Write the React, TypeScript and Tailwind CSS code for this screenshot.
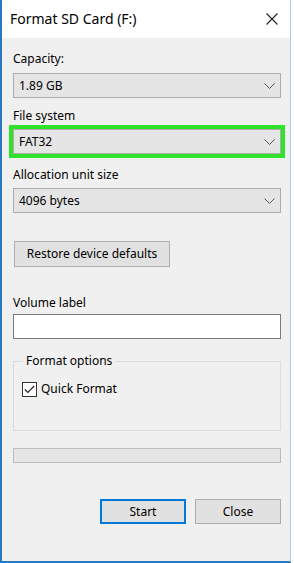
import React from "react";

const font = { fontFamily: '"Noto Sans", "Open Sans", Arial, sans-serif' };

const Chevron = () => (
  <svg width="11" height="6" viewBox="0 0 11 6" className="shrink-0">
    <polyline points="0.5,0.5 5.5,5.5 10.5,0.5" fill="none" stroke="#555" strokeWidth="1" />
  </svg>
);

// one combo box row: grey box with chevron
const Combo = ({ value, highlight = false }: { value: string; highlight?: boolean }) => (
  <div
    className={`flex h-[25px] items-center justify-between border border-[#adadad] bg-[#e5e5e5] pl-[5px] pr-[5px] ${
      highlight ? "outline-4 outline-[#2fe32a]" : ""
    }`}
  >
    <span className="text-[12px] leading-none text-black">{value}</span>
    <Chevron />
  </div>
);

const Label = ({ children, className = "" }: { children: React.ReactNode; className?: string }) => (
  <div className={`h-4 text-[12px] leading-4 text-black ${className}`}>{children}</div>
);

export default function App() {
  return (
    <div className="h-[563px] w-[294px] bg-white" style={font}>
      <div className="flex h-[563px] w-[291px] flex-col border-b-2 border-l-2 border-r border-b-[#2a78c2] border-l-[#2a78c2] border-r-[#a9cbea] bg-[#f0f0f0]">
        {/* Title bar */}
        <div className="flex h-[38px] shrink-0 items-center justify-between bg-white pl-[8px] pr-[12px]">
          <span className="text-[14px] leading-none text-black">Format SD Card (F:)</span>
          <svg width="12" height="12" viewBox="0 0 12 12">
            <path d="M0.5 0.5 L11.5 11.5 M11.5 0.5 L0.5 11.5" stroke="#222" strokeWidth="1.1" fill="none" />
          </svg>
        </div>

        <div className="flex flex-col pl-[11px] pr-[9px]">
          <Label className="mt-[13px]">Capacity:</Label>
          <div className="mt-[6px]">
            <Combo value="1.89 GB" />
          </div>

          <Label className="mt-[10px]">File system</Label>
          <div className="mt-[5px]">
            <Combo value="FAT32" highlight />
          </div>

          <Label className="mt-[13px]">Allocation unit size</Label>
          <div className="mt-[5px]">
            <Combo value="4096 bytes" />
          </div>

          <button className="mt-[28px] ml-[1px] flex h-[26px] w-[156px] items-center justify-center border border-[#adadad] bg-[#e1e1e1] text-[12px] text-black">
            Restore device defaults
          </button>

          <Label className="mt-[28px]">Volume label</Label>
          <div className="mt-[3px] h-[25px] border border-[#7a7a7a] bg-white" />

          <fieldset className="mt-[14px] h-[78px] border border-[#dcdcdc] px-[8px]">
            <legend className="ml-[1px] px-[3px] text-[12px] leading-4 text-black">Format options</legend>
            <div className="mt-[12px] flex items-center gap-[4px]">
              <div className="flex h-[15px] w-[15px] items-center justify-center border border-[#333] bg-white">
                <svg width="11" height="9" viewBox="0 0 11 9">
                  <polyline points="0.8,4.5 3.8,7.5 10.2,1" fill="none" stroke="#222" strokeWidth="1.1" />
                </svg>
              </div>
              <span className="text-[12px] leading-4 text-black">Quick Format</span>
            </div>
          </fieldset>

          <div className="mt-[17px] h-[15px] border border-[#bcbcbc] bg-[#e6e6e6]" />

          <div className="mt-[36px] flex justify-end gap-[9px]">
            <button className="flex h-[25px] w-[86px] items-center justify-center border-2 border-[#0078d7] bg-[#e1e1e1] text-[12px] text-black">
              Start
            </button>
            <button className="flex h-[25px] w-[86px] items-center justify-center border border-[#adadad] bg-[#e1e1e1] text-[12px] text-black">
              Close
            </button>
          </div>
        </div>
      </div>
    </div>
  );
}
